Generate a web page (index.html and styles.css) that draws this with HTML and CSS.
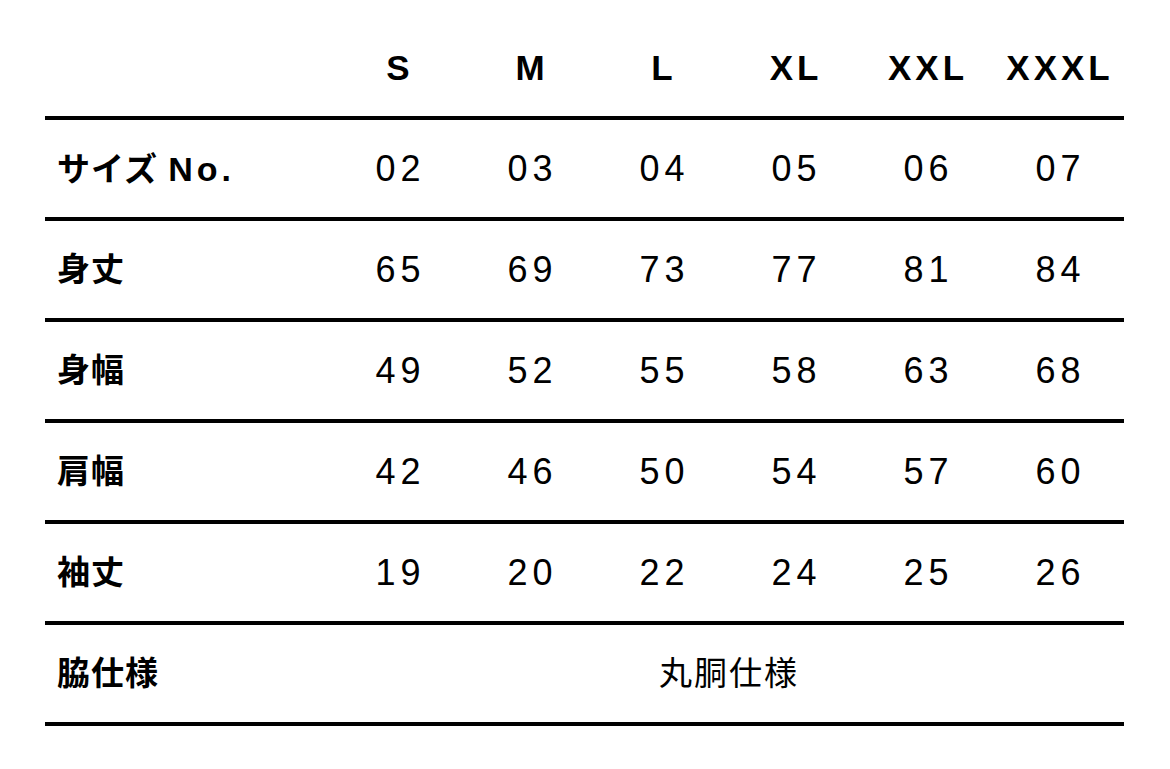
FILE: index.html
```html
<!DOCTYPE html>
<html lang="ja">
<head>
<meta charset="utf-8">
<title>サイズ表</title>
<link rel="stylesheet" href="styles.css">
</head>
<body>
<table class="size-table">
  <colgroup>
    <col class="col-label">
    <col class="col-size"><col class="col-size"><col class="col-size">
    <col class="col-size"><col class="col-size"><col class="col-size">
  </colgroup>
  <thead>
    <tr class="head-row">
      <th class="label"></th>
      <th>S</th><th>M</th><th>L</th><th>XL</th><th>XXL</th><th>XXXL</th>
    </tr>
  </thead>
  <tbody>
    <tr>
      <th class="label"><span class="kana">サイズ</span> <span class="latin">No.</span></th>
      <td>02</td><td>03</td><td>04</td><td>05</td><td>06</td><td>07</td>
    </tr>
    <tr>
      <th class="label">身丈</th>
      <td>65</td><td>69</td><td>73</td><td>77</td><td>81</td><td>84</td>
    </tr>
    <tr>
      <th class="label">身幅</th>
      <td>49</td><td>52</td><td>55</td><td>58</td><td>63</td><td>68</td>
    </tr>
    <tr>
      <th class="label">肩幅</th>
      <td>42</td><td>46</td><td>50</td><td>54</td><td>57</td><td>60</td>
    </tr>
    <tr>
      <th class="label">袖丈</th>
      <td>19</td><td>20</td><td>22</td><td>24</td><td>25</td><td>26</td>
    </tr>
    <tr>
      <th class="label">脇仕様</th>
      <td class="merged" colspan="6">丸胴仕様</td>
    </tr>
  </tbody>
</table>
</body>
</html>
```

FILE: styles.css
```css
html, body {
  margin: 0;
  padding: 0;
  background: #ffffff;
}

body {
  padding: 19px 0 0 45px;
  font-family: "Liberation Sans", "Noto Sans CJK JP", sans-serif;
  color: #000000;
}

.size-table {
  border-collapse: collapse;
  table-layout: fixed;
  width: 1079px;
}

.col-label {
  width: 287px;
}

.col-size {
  width: 132px;
}

.size-table th,
.size-table td {
  padding: 0;
  height: 97px;
  text-align: center;
  vertical-align: middle;
  line-height: 1;
}

.size-table tr {
  border-bottom: 4px solid #000000;
}

.head-row th {
  font-size: 35px;
  font-weight: 700;
  letter-spacing: 4px;
  text-indent: 4px;
}

.size-table td {
  font-size: 36px;
  font-weight: 400;
  letter-spacing: 5px;
  text-indent: 5px;
}

.size-table th.label {
  text-align: left;
  padding-left: 12px;
  font-size: 33px;
  font-weight: 700;
  letter-spacing: 1px;
  text-indent: 0;
}

.label .latin {
  font-size: 34px;
  letter-spacing: 4px;
}

.size-table td.merged {
  font-size: 33px;
  letter-spacing: 2px;
  text-indent: 2px;
}
```
